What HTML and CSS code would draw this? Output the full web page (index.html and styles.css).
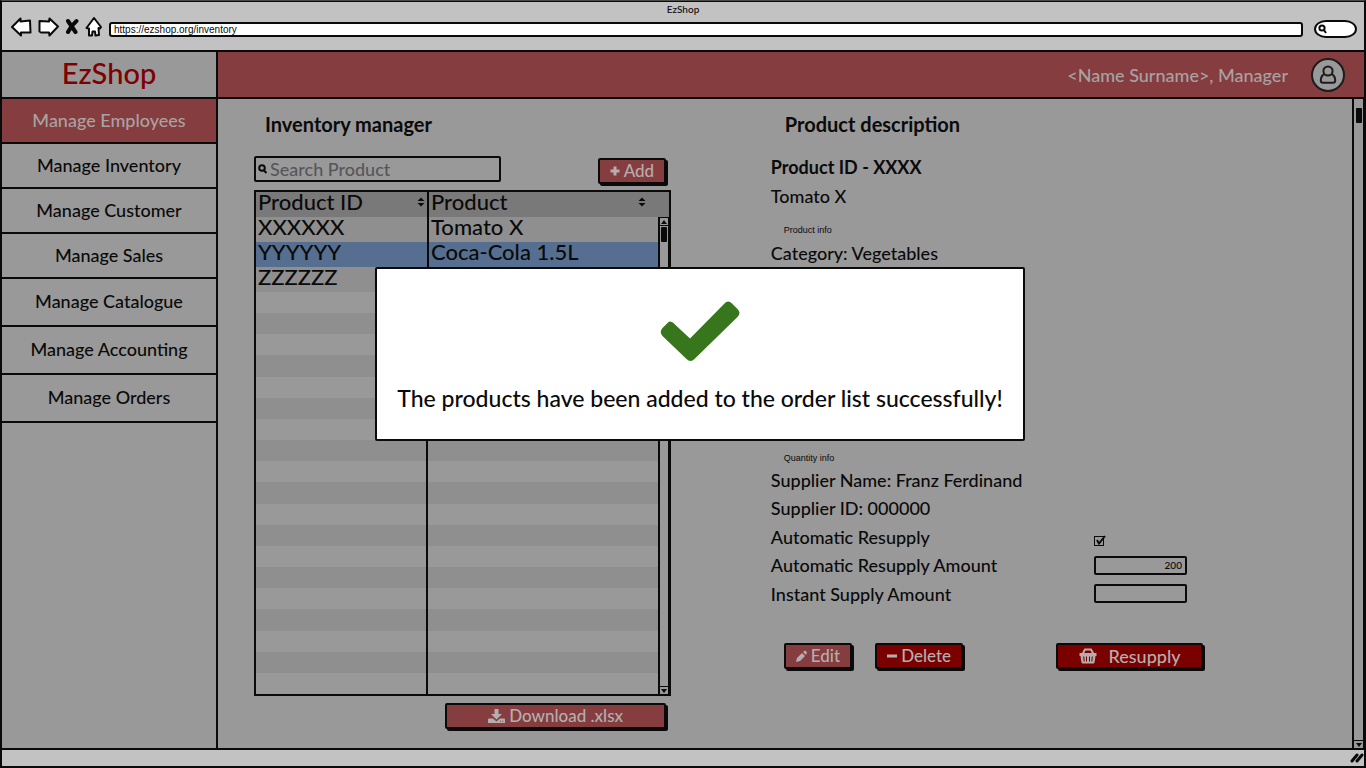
FILE: index.html
```html
<!DOCTYPE html>
<html lang="en">
<head>
<meta charset="utf-8">
<title>EzShop</title>
<link rel="stylesheet" href="styles.css">
</head>
<body>
<div class="browser">
  <div class="chrome">
    <div class="window-title">EzShop</div>
    <div class="toolbar">
      <button class="tool" aria-label="Back"><svg width="21" height="20" viewBox="0 0 21 20"><path d="M1 10 9.500 1.500 9.500 4.500 19 3.500 19.500 15.500 10 15.500 10 18.500Z"/></svg></button>
      <button class="tool tool-forward" aria-label="Forward"><svg width="21" height="20" viewBox="0 0 21 20"><path d="M20 9.500 11.500 1.500 11 4.500 1.500 4 1.500 14.500 3 15.500 11 15.500 11.500 18.500Z"/></svg></button>
      <button class="tool" aria-label="Stop"><svg width="14" height="20" viewBox="0 0 14 20"><path class="cross" d="M3 4 10.500 15M11.500 4C8 7 5 11 3 15"/></svg></button>
      <button class="tool" aria-label="Home"><svg width="18" height="20" viewBox="0 0 18 20"><path d="M9 1 16 10 15 11.500 13.500 11 14 18 10.500 18.500 10 14.500 7.500 14.500 7 18.500 4 18.500 4 11.500 1.500 11Z"/></svg></button>
      <input class="address" type="text" aria-label="Address" value="https://ezshop.org/inventory">
      <label class="web-search"><svg width="9" height="10" viewBox="0 0 9 10"><circle cx="4" cy="4" r="2.600"/><path d="M6 6 8 9"/></svg><input type="text" aria-label="Web search"></label>
    </div>
  </div>

  <div class="app">
    <aside class="sidebar">
      <div class="brand">EzShop</div>
      <nav class="menu">
        <a class="current" href="#employees">Manage Employees</a>
        <a href="#inventory">Manage Inventory</a>
        <a href="#customer">Manage Customer</a>
        <a href="#sales">Manage Sales</a>
        <a class="tall" href="#catalogue">Manage Catalogue</a>
        <a class="tall" href="#accounting">Manage Accounting</a>
        <a class="tall" href="#orders">Manage Orders</a>
      </nav>
    </aside>

    <div class="workspace">
      <header class="topbar">
        <span>&lt;Name Surname&gt;, Manager</span>
        <button class="avatar" aria-label="Profile"><svg width="34" height="34" viewBox="0 0 34 34"><circle class="ring" cx="17" cy="17" r="16"/><circle cx="17" cy="13" r="4.600"/><path d="M13.300 15.800C10.500 17.500 9.800 20 9.800 22.500Q9.800 24.800 12 24.800H22Q24.200 24.800 24.200 22.500C24.200 20 23.500 17.500 20.700 15.800"/></svg></button>
      </header>

      <div class="scroll-area">
        <main class="content">
          <section class="inventory">
            <h2>Inventory manager</h2>
            <div class="actions">
              <label class="search"><svg width="10" height="10" viewBox="0 0 10 10"><circle cx="4" cy="4" r="2.800"/><path d="M6 6.500 8.500 9"/></svg><input type="text" aria-label="Search Product" placeholder="Search Product"></label>
              <button class="btn"><svg width="10" height="12" viewBox="0 0 10 12"><path class="thick" d="M5 1.500V10.500M.5 6H9.500"/></svg>Add</button>
            </div>
            <div class="grid">
              <table>
                <thead>
                  <tr>
                    <th class="col-id"><span class="head">Product ID <svg width="8" height="10" viewBox="0 0 8 10"><path d="M4 .5 7.500 4H.5ZM4 9.500 7.500 6H.5Z"/></svg></span></th>
                    <th><span class="head head-last">Product <svg width="8" height="10" viewBox="0 0 8 10"><path d="M4 .5 7.500 4H.5ZM4 9.500 7.500 6H.5Z"/></svg></span></th>
                  </tr>
                </thead>
                <tbody>
                  <tr><td>XXXXXX</td><td>Tomato X</td></tr>
                  <tr class="selected"><td>YYYYYY</td><td>Coca-Cola 1.5L</td></tr>
                  <tr><td>ZZZZZZ</td><td></td></tr>
                </tbody>
              </table>
              <div class="stripes"></div>
              <div class="scrollbar grid-scroll">
                <span class="arrow"><svg width="8" height="6" viewBox="0 0 8 6"><path d="M4 1 7 5H1Z"/></svg></span>
                <span class="thumb"></span>
                <span class="arrow arrow-down"><svg width="8" height="6" viewBox="0 0 8 6"><path d="M1 1H7L4 5Z"/></svg></span>
              </div>
            </div>
            <button class="btn btn-download"><svg width="17" height="16" viewBox="0 0 17 16"><path fill-rule="evenodd" d="M6.500 1H10.500V6H14L8.500 11.500 3 6H6.500ZM1 10.500H5L8.500 13.500 12 10.500H16Q17 10.500 17 11.500V15H0V11.500Q0 10.500 1 10.500ZM12 12.800V13.800H13V12.800ZM14.300 12.800V13.800H15.300V12.800Z"/></svg>Download .xlsx</button>
          </section>

          <section class="product">
            <h2>Product description</h2>
            <div class="details">
              <h3>Product ID - XXXX</h3>
              <p>Tomato X</p>
              <h4>Product info</h4>
              <p>Category: Vegetables</p>
              <div class="covered"></div>
              <h4>Quantity info</h4>
              <p>Supplier Name: Franz Ferdinand</p>
              <p>Supplier ID: 000000</p>
              <div class="field"><label for="auto">Automatic Resupply</label><span class="check"><input id="auto" type="checkbox" checked><svg width="12" height="12" viewBox="0 0 12 12"><path d="M3 5 5 8.500 11 1"/></svg></span></div>
              <div class="field"><label for="auto-amount">Automatic Resupply Amount</label><input id="auto-amount" class="amount" type="text" value="200"></div>
              <div class="field"><label for="instant-amount">Instant Supply Amount</label><input id="instant-amount" class="amount" type="text"></div>
            </div>
            <div class="buttons">
              <button class="btn"><svg width="11" height="12" viewBox="0 0 11 12"><path d="M0 12 1 8 6 3 9 6 4 11ZM7 2 8.500 .7Q9 .3 9.500 .8L10.800 2.200Q11.200 2.700 10.700 3.200L10 5Z"/></svg>Edit</button>
              <button class="btn btn-strong"><svg width="10" height="12" viewBox="0 0 10 12"><path class="thick" d="M0 6H10"/></svg>Delete</button>
              <button class="btn btn-strong btn-resupply"><svg width="18" height="16" viewBox="0 0 18 16"><path class="handle" d="M3.500 6 6 1.500H12L14.500 6"/><path fill-rule="evenodd" d="M.5 5H17.500V8H16.500L15.500 14.500Q15.300 15.500 14.300 15.500H3.700Q2.700 15.500 2.500 14.500L1.500 8H.5ZM4.200 8.500 4.700 13.500H5.700L5.300 8.500ZM7 8.500V13.500H8V8.500ZM10 8.500V13.500H11V8.500ZM12.800 8.500 12.300 13.500H13.300L13.900 8.500Z"/></svg>Resupply</button>
            </div>
          </section>
        </main>
        <div class="scrollbar page-scroll">
          <span class="thumb"></span>
          <span class="arrow arrow-down"><svg width="8" height="6" viewBox="0 0 8 6"><path d="M1 1H7L4 5Z"/></svg></span>
        </div>
      </div>
    </div>
  </div>

  <div class="statusbar"><svg width="14" height="12" viewBox="0 0 14 12"><path d="M2 9 7 3M7 9 12 3"/></svg></div>
</div>

<div class="modal" role="dialog" aria-labelledby="message">
  <svg width="80" height="62" viewBox="0 0 80 62"><path d="M15.500 25 30 38.500 64 4Q68 -.5 72 3.500L77.500 9Q81.500 13 77.500 17L34.500 59Q30.500 63 26.500 59L2.500 36Q-1 32 2.500 28L8 22.500Q11.500 19.500 15.500 25Z"/></svg>
  <p id="message">The products have been added to the order list successfully!</p>
</div>
</body>
</html>
```

FILE: styles.css
```css
* { box-sizing: border-box; }

body {
  margin: 0;
  background: #4b4b49;
  color: #0a0a0a;
  font: 500 18px/24px Lato, "Liberation Sans", sans-serif;
}

h2, h3, h4, p { margin: 0; }

button, input {
  margin: 0;
  padding: 0;
  border: 0;
  background: none;
  color: inherit;
  font: inherit;
}

svg { display: block; flex: none; }

.browser {
  display: flex;
  flex-direction: column;
  min-height: 100vh;
  border: 2px solid #0a0a0a;
  border-width: 1px 2px 2px;
  border-top-color: #4b4b49;
}

/* Browser chrome */
.chrome {
  height: 51px;
  border-top: 1px solid #0a0a0a;
  border-bottom: 2px solid #0a0a0a;
  background: #c2c2c2;
}

.window-title {
  font-size: 10px;
  line-height: 14px;
  text-align: center;
}

.toolbar {
  display: flex;
  align-items: center;
  gap: 6px;
  padding: 0 7px 0 9px;
}

.tool svg {
  fill: #fff;
  stroke: #0a0a0a;
  stroke-width: 2;
  stroke-linejoin: round;
}

.tool .cross { fill: none; stroke-width: 4; stroke-linecap: round; }

.address {
  flex: 1;
  min-width: 0;
  height: 15px;
  margin: 4px 5px 0 0;
  padding: 0 3px;
  border: 2px solid #0a0a0a;
  border-radius: 3px;
  background: #fff;
  font-family: "Liberation Sans", sans-serif;
  font-size: 10px;
  line-height: 11px;
}

.web-search {
  display: flex;
  align-items: center;
  width: 43px;
  height: 18px;
  margin-top: 4px;
  padding-left: 2px;
  border: 2px solid #0a0a0a;
  border-radius: 12px / 9px;
  background: #fff;
}

.web-search input { width: 24px; height: 12px; }

.web-search svg, .search svg {
  fill: none;
  stroke: #0a0a0a;
  stroke-width: 2;
}

/* Application frame */
.app { display: flex; flex: 1; background: #999; }

.sidebar {
  width: 216px;
  border-right: 2px solid #0a0a0a;
}

.brand {
  height: 47px;
  border-bottom: 2px solid #0a0a0a;
  color: #7f0000;
  font-size: 29px;
  line-height: 41px;
  text-align: center;
}

.menu a {
  display: block;
  height: 45px;
  border-bottom: 2px solid #0a0a0a;
  color: #0a0a0a;
  line-height: 43px;
  text-align: center;
  text-decoration: none;
}

.menu .tall { height: 48px; line-height: 45px; }
.menu .current { background: #863d3f; color: #a8a3a3; }

.workspace {
  display: flex;
  flex: 1;
  flex-direction: column;
  min-width: 0;
}

.topbar {
  display: flex;
  align-items: center;
  justify-content: flex-end;
  gap: 23px;
  height: 47px;
  padding-right: 19px;
  border-bottom: 2px solid #0a0a0a;
  background: #863d3f;
  color: #a8a3a3;
}

.avatar svg { fill: none; stroke: #1c1c1c; stroke-width: 2; }
.avatar .ring { fill: #999; }

.scroll-area { display: flex; flex: 1; }

.content {
  display: grid;
  flex: 1;
  grid-template-columns: minmax(0, 417fr) minmax(0, 432fr);
  column-gap: 10.5%;
  padding: 13px 13% 19px 36px;
}

h2 {
  font-size: 20px;
  line-height: 24px;
}

/* Inventory list */
.inventory { display: flex; flex-direction: column; }
.inventory h2 { padding-left: 11px; }

.actions {
  display: flex;
  align-items: flex-end;
  justify-content: space-between;
  margin: 20px 5px 4px 0;
}

.search {
  display: flex;
  align-items: center;
  gap: 2px;
  width: 60%;
  height: 26px;
  margin-bottom: 4px;
  padding-left: 2px;
  border: 2px solid #0a0a0a;
  border-radius: 2px;
}

.search input { flex: 1; min-width: 0; height: 22px; }
.search input::placeholder { color: #56565a; opacity: 1; }

.btn {
  display: flex;
  align-items: center;
  justify-content: center;
  gap: 4px;
  height: 26px;
  padding: 0 10px;
  border: 2px solid #0a0a0a;
  border-radius: 2px;
  background: #863d3f;
  box-shadow: 2px 2px #0a0a0a;
  color: #b4aeae;
  font-size: 17px;
  line-height: 20px;
  white-space: nowrap;
}

.btn svg { fill: currentColor; }
.btn .thick { fill: none; stroke: currentColor; stroke-width: 3; }
.btn .handle { fill: none; stroke: currentColor; stroke-width: 2; }

.actions .btn { margin-bottom: 2px; }

.grid {
  position: relative;
  display: flex;
  flex: 1;
  flex-direction: column;
  border: 2px solid #0a0a0a;
}

table {
  width: 100%;
  border-collapse: collapse;
  table-layout: fixed;
  font-size: 22px;
  line-height: 20px;
}

th, td {
  height: 25px;
  padding: 0 2px;
  font-weight: inherit;
  text-align: left;
  vertical-align: top;
}

.col-id { width: 172px; }
th:first-child, td:first-child { border-right: 2px solid #0a0a0a; }
thead { background: #797979; }
tbody { background: #8f8f8f; }
.selected { background: #566f90; }

.head {
  display: flex;
  align-items: center;
  justify-content: space-between;
}

.head-last { padding-right: 21px; }
.head svg, .scrollbar svg { fill: #0a0a0a; }

.stripes {
  flex: 1;
  background:
    linear-gradient(#0a0a0a, #0a0a0a) 170px 0 / 2px 100% no-repeat,
    repeating-linear-gradient(#999 0 calc(100% / 19), #8f8f8f 0 calc(200% / 19));
}

.scrollbar {
  display: flex;
  flex-direction: column;
  align-items: center;
  width: 11px;
  border: solid #0a0a0a;
  border-width: 0 1px 0 2px;
  background: #999;
}

.grid-scroll {
  position: absolute;
  top: 25px;
  right: 0;
  bottom: 0;
  border-top-width: 1px;
}

.scrollbar .arrow {
  display: grid;
  place-items: center;
  width: 100%;
  height: 8px;
  border-bottom: 1px solid #0a0a0a;
}

.scrollbar .arrow-down {
  margin-top: auto;
  border-top: 1px solid #0a0a0a;
  border-bottom: 0;
}

.thumb {
  width: 6px;
  height: 15px;
  margin-top: 1px;
  border-radius: 1px;
  background: #0a0a0a;
}

.page-scroll { width: 12px; }
.page-scroll .thumb { margin-top: 9px; }

.btn-download {
  align-self: flex-end;
  width: 53%;
  margin: 7px 5px 0 0;
}

/* Product details */
.product h2 { padding-left: 14px; }

.details {
  display: grid;
  grid-template-rows: repeat(16, 1fr);
  align-items: center;
  height: 455px;
  margin-top: 17px;
}

h3 { font-size: 18px; }

h4 {
  padding: 12px 0 0 13px;
  font: 9px/12px "Liberation Sans", sans-serif;
}

.covered { grid-row: span 6; }

.field {
  display: grid;
  grid-template-columns: 323fr 109fr;
  align-items: center;
}

.amount {
  width: 93px;
  height: 19px;
  padding: 0 3px;
  border: 2px solid #0a0a0a;
  border-radius: 2px;
  font-size: 10px;
  line-height: 14px;
  text-align: right;
}

.check { position: relative; width: 12px; height: 12px; margin-top: 8px; }

.check input {
  display: block;
  width: 10px;
  height: 10px;
  margin-top: 1px;
  border: 1px solid #0a0a0a;
  appearance: none;
}

.check svg {
  position: absolute;
  top: 0;
  left: 0;
  fill: none;
  stroke: #0a0a0a;
  stroke-width: 2;
  pointer-events: none;
}

.buttons {
  display: flex;
  gap: 23px;
  margin: 35px 0 0 13px;
}

.btn-strong { background: #7a0000; }
.btn-resupply { gap: 12px; width: 147px; margin-left: auto; font-size: 18px; }

.statusbar {
  display: flex;
  align-items: center;
  justify-content: flex-end;
  height: 18px;
  border-top: 2px solid #0a0a0a;
  background: #c2c2c2;
}

.statusbar svg { stroke: #0a0a0a; stroke-width: 3; stroke-linecap: round; }

/* Confirmation message */
.modal {
  position: absolute;
  top: 267px;
  left: 375px;
  display: flex;
  flex-direction: column;
  align-items: center;
  gap: 21px;
  width: 650px;
  padding: 31px 10px 26px;
  border: 2px solid #0a0a0a;
  border-radius: 2px;
  background: #fff;
  font-size: 23px;
  line-height: 30px;
}

.modal svg { fill: #38761d; }
```
